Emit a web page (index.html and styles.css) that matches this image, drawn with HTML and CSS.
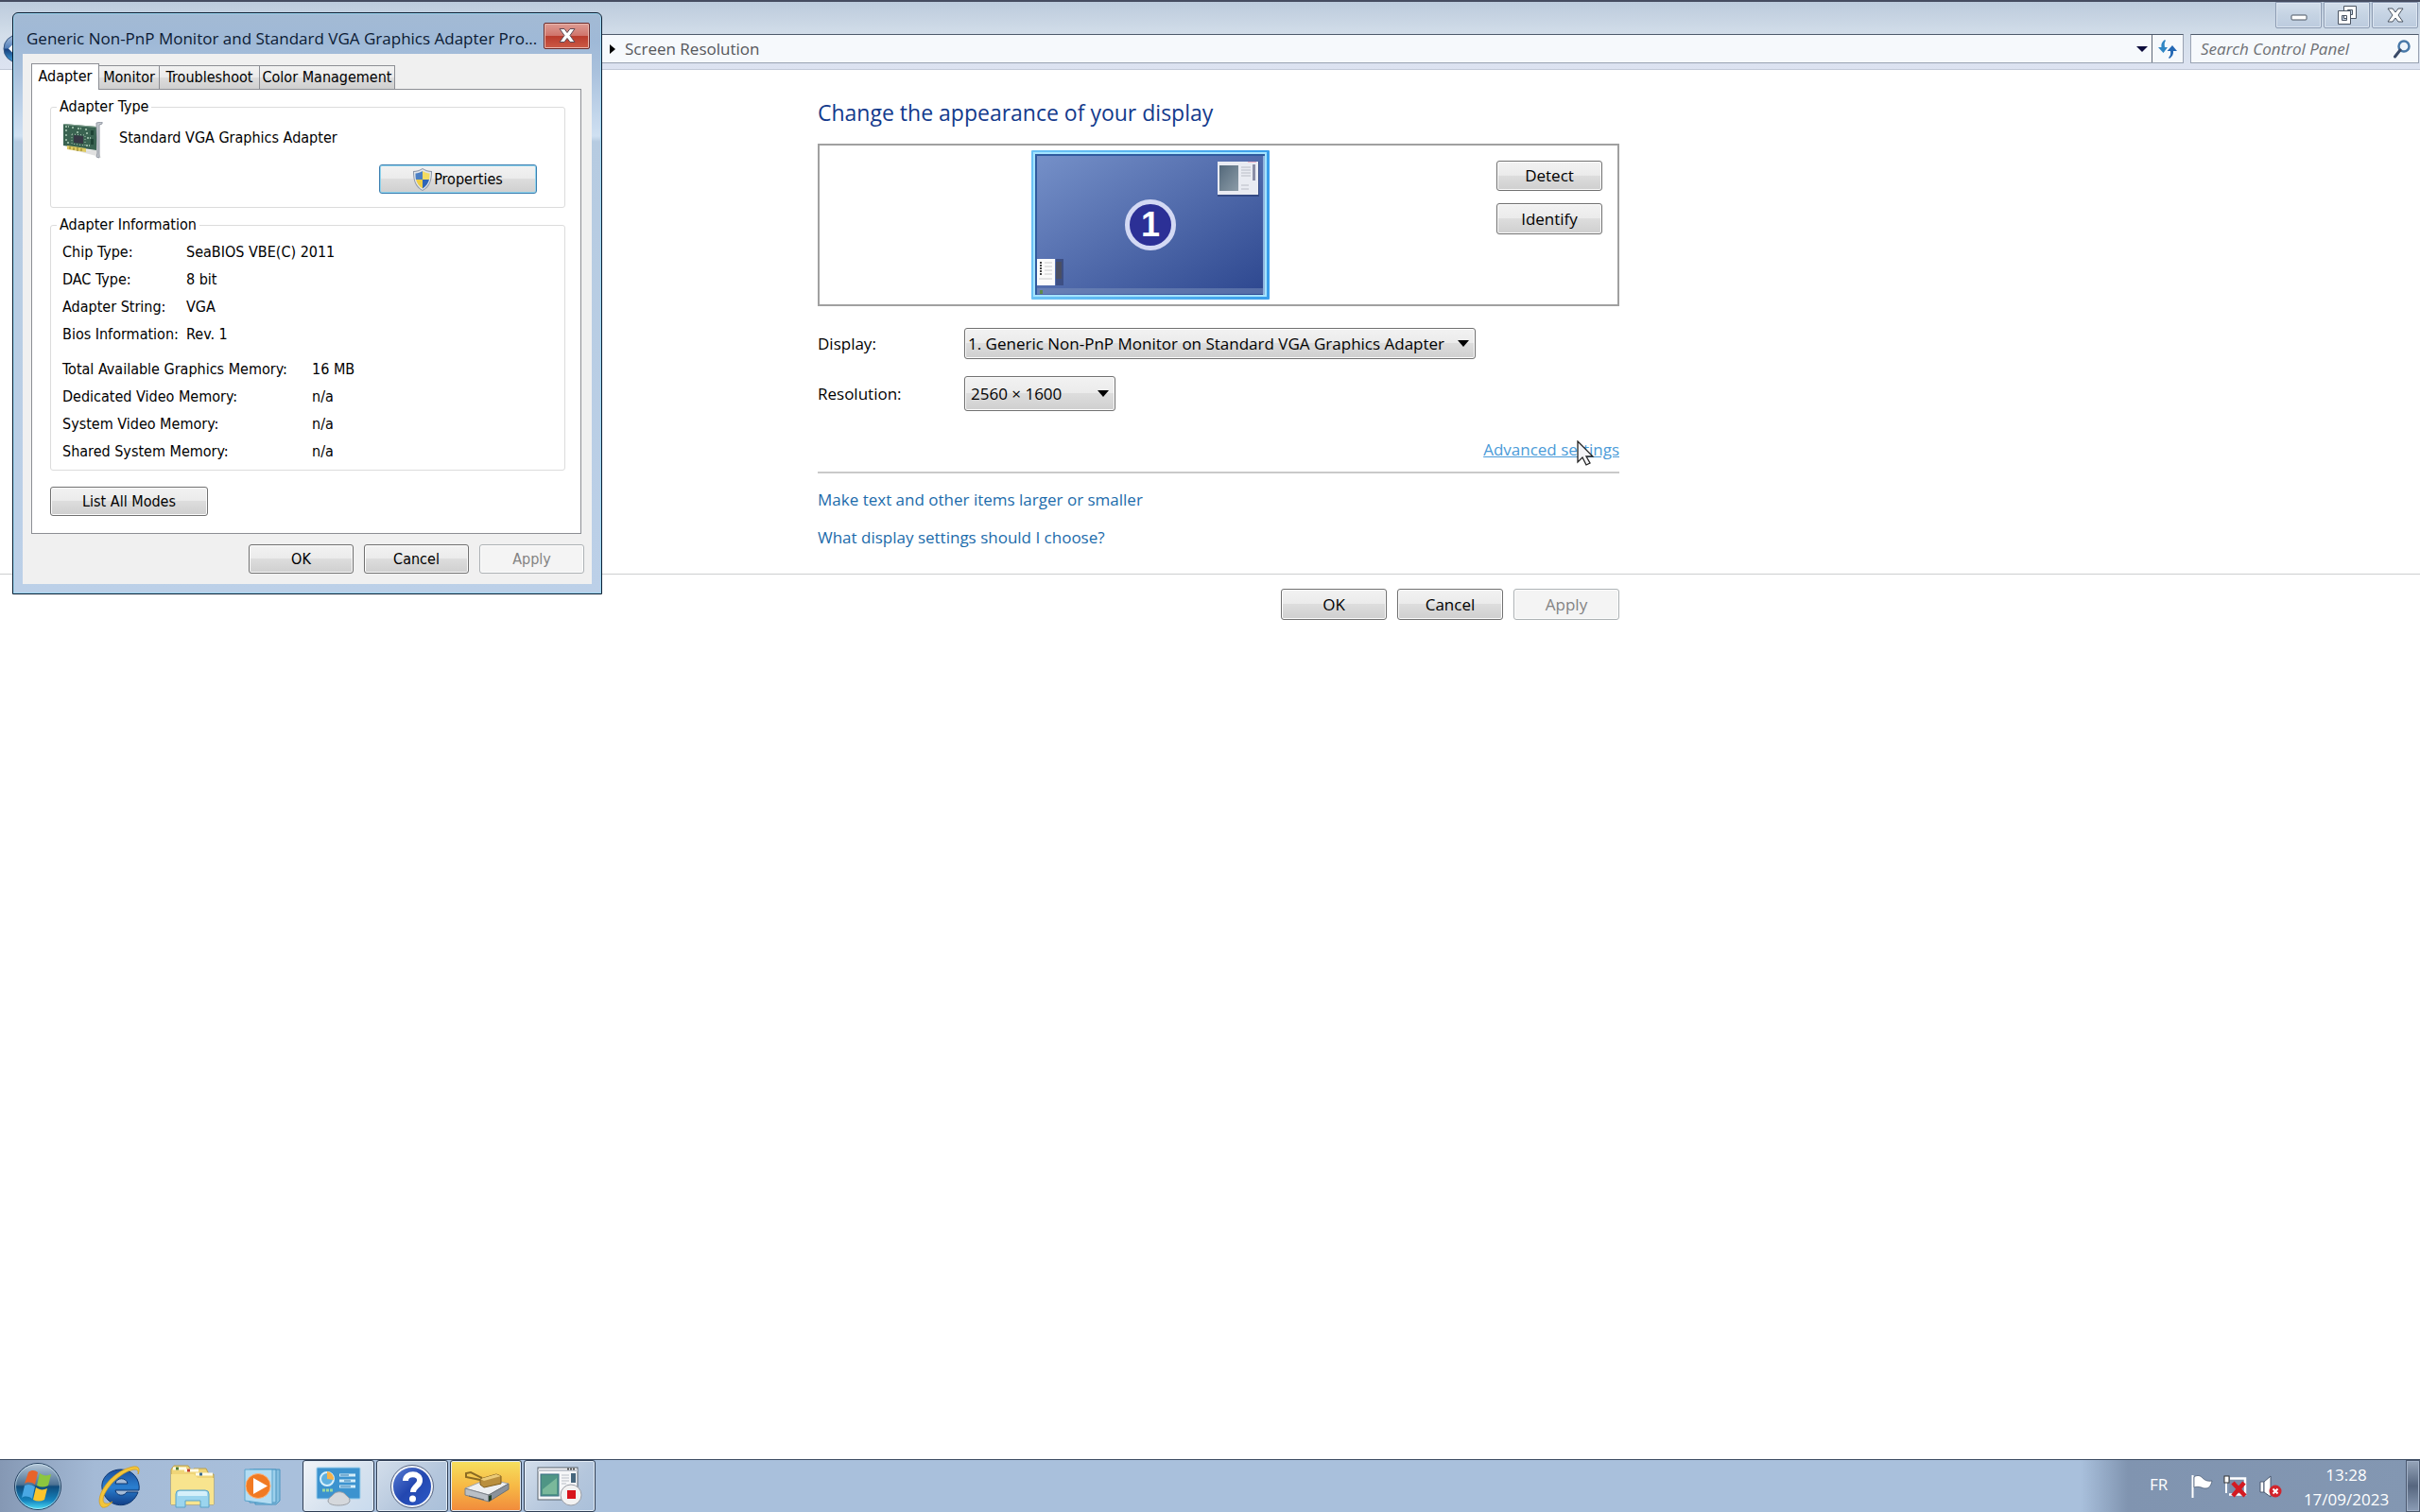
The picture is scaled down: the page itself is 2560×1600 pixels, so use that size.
FILE: index.html
```html
<!DOCTYPE html>
<html lang="en">
<head>
  <meta charset="UTF-8">
  <meta name="viewport" content="width=device-width, initial-scale=1.0">
  <title>Screen Resolution</title>
  <link rel="stylesheet" href="styles.css">
</head>
<body>

<!-- Control Panel window -->
<div class="window">
  <header class="window-head">
    <div class="caption-buttons">
      <button class="caption-btn" aria-label="Minimize">
        <svg width="20" height="22" viewBox="0 0 20 22"><rect x="2" y="11" width="16" height="5" rx="1" fill="#fff" stroke="#4b5563"/></svg>
      </button>
      <button class="caption-btn" aria-label="Restore">
        <svg width="22" height="22" viewBox="0 0 22 22"><g fill="#fff" stroke="#4b5563" fill-rule="evenodd"><path d="M7.500 1.500h13v13h-13zM11.500 5.500h5v5h-5z"/><path d="M1.500 6.500h13v14h-13zM5.500 11.500h5v5h-5z"/></g></svg>
      </button>
      <button class="caption-btn" aria-label="Close">
        <svg width="20" height="22" viewBox="0 0 20 22"><path d="M2 4h5l3 4 3-4h5l-5 7 5 7h-5l-3-4-3 4H2l5-7z" fill="#fff" stroke="#4b5563" stroke-linejoin="round"/></svg>
      </button>
    </div>
    <div class="nav-row">
      <button class="back-btn" aria-label="Back">
        <svg width="31" height="31" viewBox="0 0 31 31">
          <defs><linearGradient id="back" x1="0" y1="0" x2="0" y2="1"><stop offset="0" stop-color="#a9bfdc"/><stop offset=".48" stop-color="#5480ba"/><stop offset=".52" stop-color="#173f7c"/><stop offset="1" stop-color="#3fa3de"/></linearGradient></defs>
          <circle cx="15.500" cy="15.500" r="14.500" fill="url(#back)" stroke="#35557f"/>
          <path d="M6 15.500l8-8v5h10v6H14v5z" fill="#fff"/>
        </svg>
      </button>
      <div class="address">
        <div class="crumbs">
          <span class="crumb-arrow"></span>
          <span>Screen Resolution</span>
        </div>
        <span class="drop-arrow"></span>
        <button class="refresh-btn" aria-label="Refresh">
          <svg width="22" height="22" viewBox="0 0 22 22"><path d="M8 1C5 3 4 6 4.500 9H1l5.500 6L11 9H8C7.500 6 7.500 4 9 2z" fill="#2f86c4"/><path d="M13 21c3-2 4.500-5 4-8H21l-5-6-5.500 6H14c.5 3 0 5-2 7z" fill="#2468b4"/></svg>
        </button>
      </div>
      <div class="search">
        <input type="text" placeholder="Search Control Panel" aria-label="Search Control Panel">
        <svg width="18" height="20" viewBox="0 0 18 20"><circle cx="11" cy="7" r="5.500" fill="#eef4fb" stroke="#4878a8" stroke-width="2.500"/><path d="M7 11l-5.500 7" stroke="#3a4a68" stroke-width="3" stroke-linecap="round"/></svg>
      </div>
    </div>
  </header>

  <main class="content">
    <div class="column settings">
      <h1>Change the appearance of your display</h1>

      <div class="arrange">
        <div class="monitor">
          <svg width="252" height="158" viewBox="0 0 252 158">
            <defs>
              <linearGradient id="edge" x1="0" y1="0" x2="1" y2="0"><stop offset="0" stop-color="#6cc3f5"/><stop offset="1" stop-color="#3a9eea"/></linearGradient>
              <linearGradient id="screen" x1="0" y1="0" x2="1" y2="1"><stop offset="0" stop-color="#7590c8"/><stop offset=".35" stop-color="#5c76b4"/><stop offset="1" stop-color="#2d478f"/></linearGradient>
              <linearGradient id="shot" x1="0" y1="0" x2="1" y2="1"><stop offset="0" stop-color="#53687a"/><stop offset="1" stop-color="#8c9ca8"/></linearGradient>
            </defs>
            <rect width="252" height="158" rx="1" fill="url(#edge)"/>
            <rect x="2" y="2" width="247" height="153" fill="#a5e4ff"/>
            <rect x="4" y="4" width="243" height="149" fill="#2f5a9e"/>
            <rect x="6" y="6" width="239" height="147" fill="url(#screen)"/>
            <path d="M6 146h239v6H6z" fill="#7d93bd" opacity=".5"/>
            <path d="M245 6h2v147h-2z" fill="#8fb4dd"/>
            <rect x="197" y="12" width="44" height="37" fill="#26386e" opacity=".6"/>
            <rect x="197" y="12" width="43" height="35" fill="#e9ebf2"/>
            <rect x="199" y="16" width="20" height="27" fill="url(#shot)"/>
            <path d="M222 18h10M222 21h10M222 24h10M222 27h10M222 37h8M222 41h8" stroke="#b9bcc6"/>
            <rect x="234" y="15" width="3" height="17" fill="#8b8ea6"/>
            <path d="M229 12.500h9" stroke="#e8b0c4"/>
            <rect x="26" y="115" width="8" height="28" fill="#3d4f84"/>
            <rect x="26" y="118" width="6" height="18" fill="#4a4f63"/>
            <rect x="6" y="115" width="19" height="28" fill="#fbfbfb"/>
            <path d="M10 118v14" stroke="#444" stroke-width="2" stroke-dasharray="2 1"/>
            <path d="M14 119h8M14 123h8M14 127h8M14 131h8M8 136h14" stroke="#ccc"/>
            <rect x="9" y="148" width="3" height="4" fill="#5d8a4a"/>
            <circle cx="126" cy="79" r="24.500" fill="#2c3096" stroke="#d3d9f4" stroke-width="5"/>
          </svg>
          <span class="monitor-number">1</span>
        </div>
        <div class="arrange-buttons">
          <button class="btn">Detect</button>
          <button class="btn tall">Identify</button>
        </div>
      </div>

      <div class="field display-field">
        <label for="display">Display:</label>
        <div class="combo display-combo">
          <select id="display"><option>1. Generic Non-PnP Monitor on Standard VGA Graphics Adapter</option></select>
        </div>
      </div>
      <div class="field resolution-field">
        <label for="resolution">Resolution:</label>
        <div class="combo resolution-combo">
          <select id="resolution"><option>2560 × 1600</option></select>
        </div>
      </div>

      <div class="advanced">
        <a href="#" class="hovered">Advanced settings</a>
        <svg class="cursor" width="20" height="28" viewBox="0 0 20 28"><path d="M1 1v22l5-5 4 8 4-2-4-7h7z" fill="#f4f4f6" stroke="#222" stroke-width="1.300"/></svg>
      </div>

      <nav class="links">
        <a href="#">Make text and other items larger or smaller</a>
        <a href="#">What display settings should I choose?</a>
      </nav>
    </div>

    <div class="actions">
      <div class="column action-buttons">
        <button class="btn tall">OK</button>
        <button class="btn tall">Cancel</button>
        <button class="btn tall" disabled>Apply</button>
      </div>
    </div>
  </main>
</div>

<!-- Adapter properties dialog -->
<section class="dialog" aria-labelledby="dialogTitle">
  <div class="dialog-title">
    <h2 id="dialogTitle">Generic Non-PnP Monitor and Standard VGA Graphics Adapter Pro...</h2>
    <button class="dialog-close" aria-label="Close">
      <svg width="18" height="17" viewBox="0 0 18 17"><path d="M1 1.500h5l3 4 3-4h5l-5 7 5 7h-5l-3-4-3 4H1l5-7z" fill="#fff" stroke="#5d4a55" stroke-linejoin="round"/></svg>
    </button>
  </div>
  <div class="dialog-body">
    <div class="tabs">
      <button class="tab active">Adapter</button>
      <button class="tab tab-monitor">Monitor</button>
      <button class="tab tab-trouble">Troubleshoot</button>
      <button class="tab tab-color">Color Management</button>
    </div>
    <div class="tab-page">
      <fieldset>
        <legend>Adapter Type</legend>
        <div class="device">
          <svg width="43" height="39" viewBox="0 0 43 39">
            <path d="M8 29l28 7 5 2-4-8z" fill="#ccc" opacity=".6"/>
            <path d="M1 2l35 3v25L1 25z" fill="#3a6351"/>
            <path d="M1 2l35 3v1L1 3z" fill="#86a593"/>
            <path d="M5 25l20 3v4L5 29z" fill="#dfcb62"/>
            <path d="M8 26v3M12 27v3M16 27v4M20 28v3" stroke="#8a7a28"/>
            <path d="M12 14l10 1v8l-10-1z" fill="#363744"/>
            <path d="M10 13l14 1v11l-14-2z" fill="none" stroke="#b5c8ba" stroke-dasharray="1 2"/>
            <path d="M3 5h4M10 6h3M16 7h4M24 8h3M3 9h3M15 11h3M25 12h3M3 14h3M3 19h3M26 17h4M5 22h3M25 25h4" stroke="#93b5a0" stroke-width="2" stroke-dasharray="2 1"/>
            <path d="M30 9h3v5h-3zM30 18h3v6h-3z" fill="#1f4435"/>
            <path d="M36 1l6-1v2l-3 1v35l-3-1 1-4z" fill="#c3c7cd" stroke="#949aa4"/>
          </svg>
          <span>Standard VGA Graphics Adapter</span>
        </div>
        <button class="btn small wide focused">
          <svg width="20" height="24" viewBox="0 0 20 24">
            <path d="M10 0c3 2 6 3 10 3 0 10-2 17-10 21C2 20 0 13 0 3c4 0 7-1 10-3z" fill="#8c97a8"/>
            <path d="M10 1c3 2 6 3 9 3 0 9-2 15-9 19C3 19 1 13 1 4c3 0 6-1 9-3z" fill="#dfe4ea"/>
            <path d="M10 3v9H3C2.500 10 2.500 7 2.500 5.500 5 5.500 7.500 4.500 10 3z" fill="#4a7fc4"/>
            <path d="M10 3c2.500 1.500 5 2.500 7.500 2.500 0 2 0 4.500-.5 6.500h-7z" fill="#f3dc62"/>
            <path d="M3 12h7v9.500C6 19 4 16 3 12z" fill="#efce46"/>
            <path d="M10 12h7c-1 4-3 7-7 9.500z" fill="#2f65b8"/>
          </svg>
          Properties
        </button>
      </fieldset>

      <fieldset class="info">
        <legend>Adapter Information</legend>
        <table class="chip-table">
          <tr><th>Chip Type:</th><td>SeaBIOS VBE(C) 2011</td></tr>
          <tr><th>DAC Type:</th><td>8 bit</td></tr>
          <tr><th>Adapter String:</th><td>VGA</td></tr>
          <tr><th>Bios Information:</th><td>Rev. 1</td></tr>
        </table>
        <table class="memory-table">
          <tr><th>Total Available Graphics Memory:</th><td>16 MB</td></tr>
          <tr><th>Dedicated Video Memory:</th><td>n/a</td></tr>
          <tr><th>System Video Memory:</th><td>n/a</td></tr>
          <tr><th>Shared System Memory:</th><td>n/a</td></tr>
        </table>
      </fieldset>

      <button class="btn small wide">List All Modes</button>
    </div>
    <div class="dialog-buttons">
      <button class="btn small">OK</button>
      <button class="btn small">Cancel</button>
      <button class="btn small" disabled>Apply</button>
    </div>
  </div>
</section>

<!-- Taskbar -->
<footer class="taskbar">
  <button class="start" aria-label="Start">
    <svg width="52" height="52" viewBox="0 0 52 52">
      <defs>
        <linearGradient id="orb" x1="0" y1="0" x2="0" y2="1"><stop offset="0" stop-color="#b7c9da"/><stop offset=".46" stop-color="#4d7294"/><stop offset=".5" stop-color="#0f4c7c"/><stop offset=".8" stop-color="#1583bd"/><stop offset="1" stop-color="#4fe0f8"/></linearGradient>
      </defs>
      <circle cx="26" cy="26" r="24.500" fill="url(#orb)" stroke="#24405f"/>
      <circle cx="26" cy="26" r="23.500" fill="none" stroke="#d5ecf8" opacity=".6"/>
      <path d="M16 11c4-3 7-2 10 0l-3 13c-4-3-8-3-11-1z" fill="#e8632a"/>
      <path d="M28 12c4 3 8 3 12 1l-3 12c-4 2-8 2-12 0z" fill="#8cc63e"/>
      <path d="M12 25c4-2 7-1 11 1l-3 13c-4-3-8-3-11-1z" fill="#4aa8e4"/>
      <path d="M24 27c4 3 8 3 12 1l-3 12c-4 2-8 2-12 0z" fill="#fbc52c"/>
    </svg>
  </button>
  <div class="pinned">
    <button aria-label="Internet Explorer">
      <svg width="48" height="48" viewBox="0 0 48 48">
        <defs><linearGradient id="ie" x1="0" y1="0" x2="0" y2="1"><stop offset="0" stop-color="#1c4f9c"/><stop offset=".5" stop-color="#2a7fd0"/><stop offset="1" stop-color="#123f88"/></linearGradient></defs>
        <path d="M27 6a19 19 0 0 1 19 22H21c1 6 9 7 12 2h12C39 46 22 47 13 38 0 24 9 6 27 6zM21 21h13c-1-7-12-7-13 0z" fill="url(#ie)" stroke="#0d3670" fill-rule="evenodd"/>
        <path d="M7 46C-3 38 14 10 36 4c9-3 12 0 9 7 1-5-2-6-8-4C20 13 4 35 9 41c2 2 6 1 9-1-3 4-7 7-11 6z" fill="#f3c53a" stroke="#d09a1c" stroke-width=".7"/>
      </svg>
    </button>
    <button aria-label="Windows Explorer">
      <svg width="48" height="48" viewBox="0 0 48 48">
        <path d="M1 6l3-4h15l3 4h3v-1h13l3 6h5v32H1z" fill="#efd578" stroke="#b99f4c"/>
        <path d="M3 5h14M15 7h15M27 11h18" stroke="#fffbe6" stroke-width="3"/>
        <path d="M6 5h3" stroke="#4c7a34" stroke-width="3"/><path d="M18 7h3" stroke="#c23b2a" stroke-width="3"/><path d="M31 11h3" stroke="#38698f" stroke-width="3"/>
        <path d="M1 11h24l4 4h17v28H1z" fill="#f8e48e"/>
        <path d="M6 46V32q0-4 4-4h27q4 0 4 4v14h-9v-7H16v7z" fill="#9bd5ee" stroke="#5ba3c8"/>
        <path d="M8 34h31v-3q0-2-2-2H10q-2 0-2 2z" fill="#d5f0fa"/>
      </svg>
    </button>
    <button aria-label="Windows Media Player">
      <svg width="40" height="40" viewBox="0 0 40 40">
        <path d="M10 2h28v33l-4 4H12z" fill="#86bfe0" stroke="#4a93bf"/>
        <path d="M6 2h28v35H6z" fill="#9dd0ec" stroke="#4a93bf"/>
        <path d="M1 2h29v37L1 35z" fill="#b3dcf2" stroke="#5aa3cc"/>
        <circle cx="15" cy="19.500" r="13" fill="#f17a22" stroke="#fbb27a"/>
        <path d="M10 11l15 8.500L10 28z" fill="#fff"/>
      </svg>
    </button>
  </div>
  <div class="tasks">
    <button class="task current" aria-label="Screen Resolution">
      <svg width="48" height="42" viewBox="0 0 48 42">
        <rect x="1" y="1" width="46" height="33" rx="1" fill="#3c93cf" stroke="#9fd0ec"/>
        <circle cx="12" cy="13" r="7" fill="#5fb0e0" stroke="#d8f0fb" stroke-width="2"/>
        <path d="M12 13V5a8 8 0 0 1 7 9z" fill="#f6b34c"/>
        <path d="M25 9h17M25 15h17M25 21h17" stroke="#d5eef9" stroke-width="3"/>
        <path d="M26 9h9M30 15h7M26 21h11" stroke="#2372ad"/>
        <path d="M7 25h11" stroke="#9bd8a0" stroke-width="3" stroke-dasharray="3 1"/>
        <path d="M13 36c1-4 4-4 6-7 3-3 9-3 12 0 2 3 5 3 5 7 0 3-5 5-12 5s-11-2-11-5z" fill="#d5d8dc" stroke="#9a9fa6"/>
      </svg>
    </button>
    <button class="task" aria-label="Help">
      <svg width="46" height="46" viewBox="0 0 46 46">
        <defs><linearGradient id="help" x1="0" y1="0" x2="1" y2="1"><stop offset="0" stop-color="#5b7fd4"/><stop offset=".5" stop-color="#2347b0"/><stop offset="1" stop-color="#2c5ac8"/></linearGradient></defs>
        <circle cx="23" cy="23" r="21" fill="url(#help)" stroke="#f2f5fa" stroke-width="2"/>
        <circle cx="23" cy="23" r="22.500" fill="none" stroke="#5c6884"/>
        <path d="M16 17c0-9 16-9 15 0 0 5-7 6-7 12" fill="none" stroke="#fff" stroke-width="6"/>
        <circle cx="23.500" cy="36" r="3.500" fill="#fff"/>
      </svg>
    </button>
    <button class="task alert" aria-label="Driver installation">
      <svg width="52" height="34" viewBox="0 0 52 34">
        <path d="M4 19L28 9l22 5-21 12z" fill="#eef0f2" stroke="#a0a4aa"/>
        <path d="M4 19l25 7v7L4 26z" fill="#b9bfc6" stroke="#7c828a"/>
        <path d="M29 26l21-12v6L29 33z" fill="#8b929a" stroke="#6c7279"/>
        <path d="M29 27l3-1v5l-3 2z" fill="#24422c"/>
        <path d="M8 27l16 4" stroke="#5d636b"/>
        <path d="M20 9l17-5 5 2v8l-18 4-4-3z" fill="#b98f3e" stroke="#7e5c1c"/>
        <path d="M20 9l17-5 5 2-18 5z" fill="#ebcb79"/>
        <path d="M22 8L10 2 5 3v4l15 3" fill="none" stroke="#8a6a22" stroke-width="2"/>
      </svg>
    </button>
    <button class="task" aria-label="Recorder">
      <svg width="48" height="42" viewBox="0 0 48 42">
        <rect x="1" y="1" width="42" height="34" fill="#f5f6f8" stroke="#59626d"/>
        <path d="M1 4h42" stroke="#c5cad2" stroke-width="2"/><path d="M32 2.500h9" stroke="#555" stroke-width="2" stroke-dasharray="2 1"/>
        <rect x="4" y="8" width="19" height="23" fill="#4f9585" stroke="#3c6f86"/>
        <path d="M6 24l15-12v17H6z" fill="#7ab89b"/>
        <path d="M26 9h8M26 12h8M26 15h8M26 18h5" stroke="#b9bec6"/>
        <rect x="36" y="7" width="5" height="10" fill="#46667c"/>
        <circle cx="36" cy="30" r="11" fill="#f2f2f2" stroke="#9a9ea6"/>
        <rect x="32" y="25" width="9" height="9" fill="#d8141c"/>
      </svg>
    </button>
  </div>
  <div class="tray">
    <span class="lang">FR</span>
    <svg class="flag" width="24" height="26" viewBox="0 0 24 26"><path d="M2.500 1v24" stroke="#fff" stroke-width="2"/><path d="M4 3c4-3 7-1 9 1s5 4 10 3c-1 5-3 8-7 8-4 0-6-3-12-1z" fill="#fff" stroke="#41506a" stroke-width=".7"/></svg>
    <svg class="net" width="26" height="26" viewBox="0 0 26 26"><path d="M7 4.500h16v17H6" fill="#7b8ca8" stroke="#fff" stroke-width="2.500"/><path d="M3 9v11" stroke="#fff" stroke-width="2"/><rect x="1" y="2" width="5" height="7" fill="#fff" stroke="#333"/><path d="M10 9l13 14M22 9L10 23" stroke="#d41a22" stroke-width="4.500"/></svg>
    <svg class="sound" width="26" height="26" viewBox="0 0 26 26"><path d="M2 8h4v11H2z" fill="#fff" stroke="#4a5970"/><path d="M6 8l7-6v22l-7-5z" fill="#fff" stroke="#4a5970"/><circle cx="18" cy="18" r="6.500" fill="#d2242c"/><path d="M15.500 15.500l5 5M20.500 15.500l-5 5" stroke="#fff" stroke-width="2"/></svg>
    <div class="clock"><span>13:28</span><span>17/09/2023</span></div>
    <button class="show-desktop" aria-label="Show desktop"></button>
  </div>
</footer>

</body>
</html>
```
FILE: styles.css
```css
/* Basic styling */
* { box-sizing: border-box; margin: 0; padding: 0; }
body { display: flex; flex-direction: column; height: 100vh; overflow: hidden; background-color: #fff; color: #000; font-family: "Open Sans", "Noto Sans", sans-serif; font-size: 17px; line-height: 24px; }
button, input, select { font: inherit; color: inherit; }
button { display: flex; align-items: center; justify-content: center; background: none; border: none; }
svg { display: block; flex: none; }
a { color: #1b6bab; text-decoration: none; }

/* Shared push button */
.btn { width: 112px; height: 32px; border: 1px solid #707070; border-radius: 3px; background: linear-gradient(#f2f2f2, #ebebeb 48%, #dddddd 50%, #cfcfcf); box-shadow: inset 0 0 0 1px #fcfcfc; }
.btn.tall { height: 33px; }
.btn.small { width: 111px; height: 31px; font-size: 16px; }
.btn.wide { width: 167px; }
.btn.focused { border-color: #3c7fb1; box-shadow: inset 0 0 0 1px #8fd3ec; }
.btn:disabled { border-color: #adb2b5; background: #f4f4f4; color: #838383; }

/* Window header */
.window { flex: 1; display: flex; flex-direction: column; min-height: 0; }
.window-head { height: 74px; border-top: 2px solid #454c60; border-bottom: 1px solid #c2c9d8; background: linear-gradient(#bccbdc, #d3deea 50%, #dde3f1); }
.caption-buttons { display: flex; justify-content: flex-end; gap: 2px; height: 34px; padding-right: 2px; }
.caption-btn { width: 49px; height: 28px; border: 1px solid #8c9bb2; border-radius: 0 0 2px 2px; background: linear-gradient(#d3deeb, #c5d3e3 50%, #bccbde); box-shadow: inset 0 0 0 1px #dde6f1; }
.nav-row { display: flex; align-items: center; height: 31px; padding: 0 1px 0 3px; }
.address { flex: 1; display: flex; align-items: center; height: 31px; margin: 0 7px 0 40px; border: 1px solid #99a2b2; border-top-color: #4e5a6b; background-color: #f6f9fc; }
.crumbs { flex: 1; display: flex; align-items: center; gap: 10px; padding-left: 570px; color: #55565a; }
.crumb-arrow { border: 5px solid transparent; border-left: 6px solid #000; border-right: 0; }
.drop-arrow { margin-right: 4px; border: 6px solid transparent; border-top-color: #0c0c3c; border-bottom: 0; }
.refresh-btn { width: 33px; height: 29px; border-left: 1px solid #5f6978; }
.search { display: flex; align-items: center; width: 242px; height: 31px; padding: 0 8px 0 10px; border: 1px solid #99a2b2; border-top-color: #4e5a6b; background-color: #f6f9fc; }
.search input { flex: 1; width: 100%; min-width: 0; border: none; outline: none; background: none; font-style: italic; }
.search input::placeholder { color: #6d6f73; opacity: 1; }

/* Display settings */
.content { flex: 1; }
.column { width: 866px; margin: 0 auto; padding-left: 18px; }
.settings { padding-top: 29px; padding-bottom: 26px; }
h1 { color: #133a8c; font-size: 23px; font-weight: normal; line-height: 32px; }
.arrange { display: flex; justify-content: flex-end; height: 172px; margin-top: 17px; padding: 5px 16px; border: 2px solid #a0a0a0; }
.monitor { position: relative; margin-right: 240px; }
.monitor-number { position: absolute; inset: 0; display: flex; align-items: center; justify-content: center; color: #fff; font-family: "Liberation Sans", sans-serif; font-size: 36px; font-weight: bold; }
.arrange-buttons { display: flex; flex-direction: column; gap: 13px; padding-top: 11px; }
.field { display: flex; align-items: center; }
.field label { width: 155px; }
.display-field { margin-top: 23px; height: 33px; }
.resolution-field { margin-top: 18px; height: 37px; }
.combo { position: relative; height: 100%; }
.combo::after { content: ""; position: absolute; right: 7px; top: calc(50% - 4px); border: 6px solid transparent; border-top: 7px solid #000; border-bottom: 0; pointer-events: none; }
.combo select { width: 100%; height: 100%; padding-left: 3px; appearance: none; border: 1px solid #707070; border-radius: 3px; background: linear-gradient(#f2f2f2, #ebebeb 48%, #dddddd 50%, #cfcfcf); box-shadow: inset 0 0 0 1px #fcfcfc; }
.display-combo { width: 541px; }
.resolution-combo { width: 160px; }
.resolution-combo select { padding-left: 6px; }
.advanced { position: relative; margin-top: 29px; padding-bottom: 11px; border-bottom: 2px solid #c9c9c9; text-align: right; }
.advanced .hovered { color: #4b9bd8; text-decoration: underline; }
.cursor { position: absolute; right: 25px; top: 2px; }
.links { display: flex; flex-direction: column; align-items: flex-start; gap: 16px; padding-top: 16px; }
.actions { border-top: 1px solid #cdcfd0; padding-top: 15px; }
.action-buttons { display: flex; justify-content: flex-end; gap: 11px; }

/* Adapter dialog */
.dialog { position: absolute; left: 13px; top: 13px; width: 624px; border: 1px solid #0c1e33; border-radius: 6px 6px 0 0; padding: 0 10px 10px; background: linear-gradient(#a3bad4, #9fb9d7 30px, #a8c0dc 60px, #cfe0f2 130px, #b6cbe1 136px, #bcd0e8); box-shadow: inset 0 0 0 1px #9cd4ee; font-family: "DejaVu Sans Condensed", "Noto Sans", sans-serif; font-size: 16px; line-height: 20px; }
.dialog-title { display: flex; align-items: center; justify-content: space-between; height: 43px; padding: 11px 2px 0 4px; }
.dialog-title h2 { font-family: "Open Sans", "Noto Sans", sans-serif; font-size: 17px; font-weight: normal; color: #0b1a33; white-space: nowrap; }
.dialog-close { width: 49px; height: 28px; margin-bottom: 7px; border: 1px solid #6b2a2a; border-radius: 2px; background: linear-gradient(#dd9c94, #d0756c 48%, #b93a2c 50%, #cc5b46); box-shadow: inset 0 0 0 1px #eab8ae; }
.dialog-body { padding: 10px 8px 11px 9px; background-color: #f0f0f0; }
.tabs { display: flex; align-items: flex-end; height: 27px; }
.tab { height: 25px; border: 1px solid #8c8e94; border-left: none; border-bottom: none; background: linear-gradient(#f2f2f2, #ebebeb 48%, #dddddd 50%, #cfcfcf); }
.tab.active { position: relative; width: 72px; height: 28px; margin-bottom: -1px; border-left: 1px solid #8c8e94; background: #fff; padding-bottom: 2px; }
.tab-monitor { width: 64px; }
.tab-trouble { width: 106px; }
.tab-color { width: 143px; }
.tab-page { width: 582px; padding: 8px 16px 18px 19px; border: 1px solid #8c8e94; background-color: #fff; }
fieldset { display: flex; flex-direction: column; padding: 6px 29px 13px 12px; border: 1px solid #dcdcdc; border-radius: 3px; }
legend { margin-left: -6px; padding: 0 3px; }
.device { display: flex; align-items: center; gap: 17px; height: 39px; }
.device span { padding-bottom: 5px; }
fieldset .btn { align-self: flex-end; margin-top: 6px; margin-bottom: 1px; gap: 2px; }
.info { margin: 8px 0 17px; padding-top: 4px; padding-bottom: 5px; }
table { border-collapse: collapse; }
th { font-weight: normal; text-align: left; }
th, td { height: 29px; white-space: nowrap; }
.chip-table { margin-bottom: 8px; }
.chip-table th { width: 131px; }
.memory-table th { width: 264px; }
.dialog-buttons { display: flex; justify-content: flex-end; gap: 11px; padding-top: 11px; }

/* Taskbar */
.taskbar { display: flex; align-items: center; height: 56px; border-top: 1px solid #3d4c63; background: linear-gradient(90deg, #8598b4, #a4bad6 100px, #a9c0dc 300px, #a9c0dc 2200px, #a9c6e4); }
.start { width: 80px; }
.pinned { display: flex; align-items: center; justify-content: space-between; width: 197px; margin-left: 21px; }
.tasks { display: flex; gap: 2px; margin-left: 22px; }
.task { width: 76px; height: 55px; border: 1px solid #2f3e55; border-radius: 3px; background: linear-gradient(135deg, #d3deeb, #b4c6dc 60%, #aac0da); box-shadow: inset 0 0 0 1px #e3ecf5; }
.task.current { background: linear-gradient(135deg, #f1f4f8, #d5e1ee 60%, #c9dbee); }
.task.alert { background: linear-gradient(#f6e05e, #f7b945 50%, #f18a3c); }
.tray { display: flex; align-items: center; height: 55px; margin-left: auto; padding-left: 73px; background: linear-gradient(90deg, rgba(126, 143, 168, 0), #8094b0 50px, #8397b2); color: #fff; }
.lang { width: 43px; padding-bottom: 4px; }
.net, .sound { margin-left: 11px; }
.clock { display: flex; flex-direction: column; align-items: center; width: 130px; padding: 3px 0 0 4px; line-height: 26px; }
.show-desktop { width: 15px; height: 55px; border: 1px solid #4c5a70; background: linear-gradient(#96a5ba, #56667f 50%, #8b9cb5); box-shadow: inset 0 0 0 1px #a3b2c8; }
```
